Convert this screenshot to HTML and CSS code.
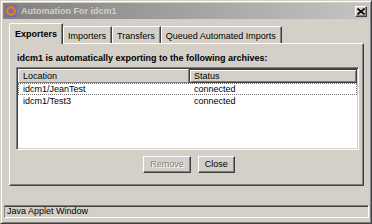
FILE: index.html
```html
<!DOCTYPE html>
<html>
<head>
<meta charset="utf-8">
<link rel="stylesheet" href="styles.css">
</head>
<body>
<div class="window">
  <div class="titlebar">
    <svg class="appicon" width="12" height="12" viewBox="0 0 12 12">
      <rect x="0" y="0" width="12" height="12" rx="1" fill="#7a6aa8"/>
      <circle cx="6" cy="6" r="3.8" fill="none" stroke="#d9822b" stroke-width="2.2"/>
      <circle cx="6" cy="6" r="1.3" fill="#a07040"/>
    </svg>
    <span class="title">Automation For idcm1</span>
    <span class="closebtn">
      <svg width="8" height="7" viewBox="0 0 8 7"><path d="M0.5 0.5 L7.5 6.5 M7.5 0.5 L0.5 6.5" stroke="#000" stroke-width="1.6"/></svg>
    </span>
  </div>
  <div class="tabs">
    <div class="tab selected">Exporters</div>
    <div class="tab">Importers</div>
    <div class="tab">Transfers</div>
    <div class="tab">Queued Automated Imports</div>
  </div>
  <div class="panel">
    <div class="heading">idcm1 is automatically exporting to the following archives:</div>
    <div class="table">
      <div class="thead">
        <div class="th loc">Location</div>
        <div class="th status">Status</div>
      </div>
      <div class="row focus">
        <div class="td loc">idcm1/JeanTest</div>
        <div class="td status">connected</div>
      </div>
      <div class="row">
        <div class="td loc">idcm1/Test3</div>
        <div class="td status">connected</div>
      </div>
    </div>
    <div class="buttons">
      <div class="btn disabled">Remove</div>
      <div class="btn">Close</div>
    </div>
  </div>
  <div class="statusbar">Java Applet Window</div>
</div>
</body>
</html>
```
FILE: styles.css
```css
html, body {
  margin: 0;
  padding: 0;
  background: #d4d0c8;
}
.window {
  width: 372px;
  height: 224px;
  box-sizing: border-box;
  background: #d4d0c8;
  border: 1px solid;
  border-color: #d4d0c8 #404040 #404040 #d4d0c8;
  box-shadow: inset 1px 1px #ffffff, inset -1px -1px #808080;
  padding: 2px;
  display: flex;
  flex-direction: column;
  font-family: "Liberation Sans", Arial, sans-serif;
  font-size: 9px;
  color: #000;
}
.titlebar {
  height: 16px;
  flex: none;
  display: flex;
  align-items: center;
  background: linear-gradient(to right, #808080, #c4c4c4);
  padding-left: 2px;
  padding-right: 2px;
}
.appicon { flex: none; }
.title {
  margin-left: 4px;
  color: #d4d0c8;
  font-weight: bold;
  font-size: 9px;
  flex: 1;
}
.closebtn {
  width: 12px;
  height: 11px;
  box-sizing: border-box;
  background: #d4d0c8;
  border: 1px solid;
  border-color: #fff #404040 #404040 #fff;
  box-shadow: inset -1px -1px #808080;
  display: flex;
  align-items: center;
  justify-content: center;
}
.tabs {
  display: flex;
  align-items: flex-end;
  height: 20px;
  margin-top: 4px;
  margin-left: 6px;
  position: relative;
  z-index: 1;
}
.tab {
  height: 17px;
  box-sizing: border-box;
  padding: 3px 5px 0 4px;
  border-left: 1px solid #fff;
  border-top: 1px solid #fff;
  border-right: 1px solid #404040;
  box-shadow: inset -1px 0 #808080;
  border-top-left-radius: 2px;
  line-height: 12px;
}
.tab.selected {
  height: 21px;
  margin-bottom: -1px;
  padding: 4px 5px 0 5px;
  font-weight: bold;
  background: #d4d0c8;
}
.panel {
  margin-left: 6px;
  width: 355px;
  height: 143px;
  box-sizing: border-box;
  border: 1px solid;
  border-color: #fff #404040 #404040 #fff;
  box-shadow: inset -1px -1px #808080;
  padding: 9px 4px 0 6px;
  display: flex;
  flex-direction: column;
}
.heading {
  font-weight: bold;
  line-height: 11px;
  height: 11px;
  margin-left: 1px;
}
.table {
  margin-top: 3px;
  height: 83px;
  box-sizing: border-box;
  border: 1px solid;
  border-color: #808080 #fff #fff #808080;
  box-shadow: inset 1px 1px #404040, inset -1px -1px #d4d0c8;
  background: #fff;
  padding: 1px;
}
.thead {
  display: flex;
  height: 14px;
  background: #d4d0c8;
}
.th {
  box-sizing: border-box;
  height: 14px;
  border: 1px solid;
  border-color: #fff #808080 #808080 #fff;
  line-height: 12px;
  padding-left: 4px;
}
.th.loc { width: 171px; }
.th.status {
  flex: 1;
  border: 1px solid #404040;
  box-shadow: inset 1px 1px #fff, inset -1px -1px #808080;
  padding-left: 4px;
}
.row {
  display: flex;
  height: 12px;
  box-sizing: border-box;
  line-height: 10px;
  border: 1px dotted transparent;
}
.row.focus { border-color: #707070; }
.td.loc { width: 170px; padding-left: 4px; box-sizing: border-box; }
.td.status { flex: 1; padding-left: 5px; }
.buttons {
  display: flex;
  justify-content: center;
  gap: 7px;
  margin-top: 6px;
  padding-left: 3px;
}
.btn {
  height: 17px;
  box-sizing: border-box;
  padding: 0 6px;
  border: 1px solid;
  border-color: #fff #404040 #404040 #fff;
  box-shadow: inset -1px -1px #808080;
  line-height: 15px;
}
.btn.disabled {
  color: #808080;
  text-shadow: 1px 1px #fff;
}
.statusbar {
  margin-top: 19px;
  margin-left: 1px;
  height: 13px;
  box-sizing: border-box;
  border: 1px solid;
  border-color: #808080 #fff #fff #808080;
  box-shadow: inset 0 1px #404040;
  line-height: 11px;
  padding-left: 2px;
}
```
